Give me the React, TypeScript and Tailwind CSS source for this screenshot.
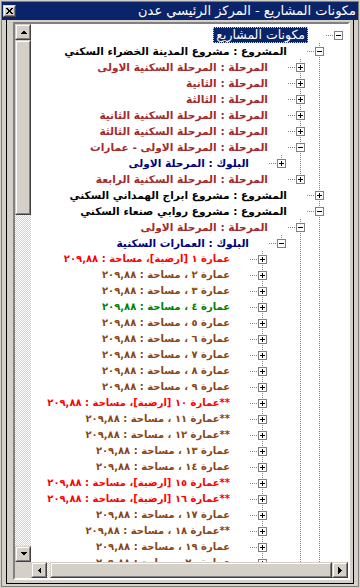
import React from 'react';

const BROWN = '#a52a2a';
const NAVY = '#000080';
const SADDLE = '#8b4513';
const FONT = { fontFamily: '"DejaVu Sans", sans-serif' };

const ar = (n: number) => String(n).replace(/[0-9]/g, (d) => '٠١٢٣٤٥٦٧٨٩'[Number(d)]);

type Row = { l: number; t: string; c: string; open?: boolean; sel?: boolean };

const head: Row[] = [
  { l: 0, t: 'مكونات المشاريع', c: '#ffffff', open: true, sel: true },
  { l: 1, t: 'المشروع : مشروع المدينة الخضراء السكني', c: '#000000', open: true },
  { l: 2, t: 'المرحلة : المرحلة السكنية الاولى', c: BROWN },
  { l: 2, t: 'المرحلة : الثانية', c: BROWN },
  { l: 2, t: 'المرحلة : الثالثة', c: BROWN },
  { l: 2, t: 'المرحلة : المرحلة السكنية الثانية', c: BROWN },
  { l: 2, t: 'المرحلة : المرحلة السكنية الثالثة', c: BROWN },
  { l: 2, t: 'المرحلة : المرحلة الاولى - عمارات', c: BROWN, open: true },
  { l: 3, t: 'البلوك : المرحلة الاولى', c: NAVY },
  { l: 2, t: 'المرحلة : المرحلة السكنية الرابعة', c: BROWN },
  { l: 1, t: 'المشروع : مشروع ابراج الهمداني السكني', c: '#000000' },
  { l: 1, t: 'المشروع : مشروع روابي صنعاء السكني', c: '#000000', open: true },
  { l: 2, t: 'المرحلة : المرحلة الاولى', c: BROWN, open: true },
  { l: 3, t: 'البلوك : العمارات السكنية', c: NAVY, open: true },
];

const starred = [10, 11, 12, 15, 16, 18];
const ground = [1, 10, 15, 16];

const buildings: Row[] = Array.from({ length: 20 }, (_, i) => {
  const n = i + 1;
  const g = ground.includes(n);
  const t = `${starred.includes(n) ? '**' : ''}عمارة ${ar(n)} ${g ? '[ارضية]' : ''}، مساحة : ٢٠٩,٨٨`;
  return { l: 4, t, c: g ? '#ff0000' : n === 4 ? '#008000' : SADDLE };
});

const rows: Row[] = [...head, ...buildings];

// levels of the items that sit below the visible part of the list
const below = [4, 2, 1];

// does the line at level k still have a sibling further down from row i
const continues = (i: number, k: number) => {
  const levels = [...rows.slice(i + 1).map((r) => r.l), ...below];
  for (const l of levels) {
    if (l < k) return false;
    if (l === k) return true;
  }
  return false;
};

const DOT = { stroke: '#808080', strokeDasharray: '1 1' };

function Rail({ on }: { on: boolean }) {
  return (
    <svg width="19" height="16" className="shrink-0" shapeRendering="crispEdges">
      {on && <line x1="9.5" y1="0" x2="9.5" y2="16" {...DOT} />}
    </svg>
  );
}

function Connector({ root, next, open }: { root: boolean; next: boolean; open?: boolean }) {
  return (
    <svg width="40" height="16" className="shrink-0" shapeRendering="crispEdges">
      {!root && <line x1="30.5" y1="0" x2="30.5" y2="8" {...DOT} />}
      {next && <line x1="30.5" y1="8" x2="30.5" y2="16" {...DOT} />}
      <line x1="18" y1="8.5" x2="30" y2="8.5" {...DOT} />
      <rect x="26.5" y="4.5" width="8" height="8" fill="#ffffff" stroke="#808080" />
      <line x1="28" y1="8.5" x2="33" y2="8.5" stroke="#000000" />
      {!open && <line x1="30.5" y1="6" x2="30.5" y2="11" stroke="#000000" />}
    </svg>
  );
}

function Raised({ className = '', children }: { className?: string; children?: React.ReactNode }) {
  return (
    <div className={`border border-t-[#d4d0c8] border-l-[#d4d0c8] border-b-[#404040] border-r-[#404040] bg-[#d4d0c8] ${className}`}>
      <div className="w-full h-full border border-t-white border-l-white border-b-[#808080] border-r-[#808080] flex items-center justify-center">
        {children}
      </div>
    </div>
  );
}

const Arrow = ({ d, w, h }: { d: string; w: number; h: number }) => (
  <svg width={w} height={h} shapeRendering="crispEdges">
    <polygon points={d} fill="#000000" />
  </svg>
);

const track = 'bg-[repeating-conic-gradient(#d4d0c8_0%_25%,#ffffff_0%_50%)] bg-size-[2px_2px]';

function labelClass(r: Row) {
  if (r.sel) return 'h-4 leading-[14px] px-[2px] whitespace-nowrap text-[12.5px] bg-[#0a246a] border border-dotted border-[#e4d46c]';
  if (r.l === 4) return 'h-4 leading-4 px-[2px] whitespace-nowrap text-[10px] font-bold';
  return 'h-4 leading-4 px-[2px] whitespace-nowrap text-[10.6px] font-bold';
}

export default function App() {
  return (
    <div className="w-[360px] h-[588px] bg-[#d4d0c8] p-px overflow-hidden" style={FONT}>
      <div className="h-full border border-[#808080] flex flex-col">
        <div className="h-[18px] bg-[#0a246a] flex items-center justify-between pl-px pr-[2px] shrink-0">
          <Raised className="w-[13px] h-[12px]">
            <svg width="7" height="6" shapeRendering="crispEdges">
              <path d="M0 0 L7 6 M7 0 L0 6" stroke="#000000" strokeWidth="1.3" />
            </svg>
          </Raised>
          <span dir="rtl" className="text-white text-[13px] leading-[18px] whitespace-nowrap">
            مكونات المشاريع - المركز الرئيسي عدن
          </span>
        </div>

        <div className="flex-1 pl-[4px] pr-[4px] pb-[2px] flex min-h-0">
          <div className="flex-1 border-x border-b border-black pl-[6px] pr-[3px] pt-[2px] pb-[3px] flex min-h-0">
            <div className="flex-1 border-2 border-t-[#808080] border-l-[#808080] border-b-white border-r-white flex min-h-0">
              <div className="flex-1 grid grid-cols-[16px_1fr] grid-rows-[1fr_16px] bg-white min-h-0">
                <div className="flex flex-col min-h-0">
                  <Raised className="w-4 h-4 shrink-0">
                    <Arrow d="0,4 7,4 3.5,0.5" w={7} h={4} />
                  </Raised>
                  <Raised className="w-4 h-[175px] shrink-0" />
                  <div className={`flex-1 ${track}`} />
                  <Raised className="w-4 h-4 shrink-0">
                    <Arrow d="0,0 7,0 3.5,3.5" w={7} h={4} />
                  </Raised>
                </div>

                <div dir="rtl" className="pt-[3px] overflow-hidden min-w-0 min-h-0">
                  {rows.map((r, i) => (
                    <div key={i} className="flex h-4">
                      {Array.from({ length: r.l }, (_, k) => (
                        <Rail key={k} on={continues(i, k)} />
                      ))}
                      <Connector root={r.l === 0} next={continues(i, r.l)} open={r.open} />
                      <span className={labelClass(r)} style={{ color: r.c }}>
                        {r.t}
                      </span>
                    </div>
                  ))}
                </div>

                <div className="bg-[#d4d0c8]" />
                <div className="flex min-w-0">
                  <Raised className="w-4 h-4 shrink-0">
                    <Arrow d="4,0 4,7 0.5,3.5" w={4} h={7} />
                  </Raised>
                  <div className={`w-[3px] shrink-0 ${track}`} />
                  <Raised className="flex-1 h-4" />
                  <Raised className="w-4 h-4 shrink-0">
                    <Arrow d="0,0 0,7 3.5,3.5" w={4} h={7} />
                  </Raised>
                </div>
              </div>
            </div>
          </div>
        </div>
      </div>
    </div>
  );
}
